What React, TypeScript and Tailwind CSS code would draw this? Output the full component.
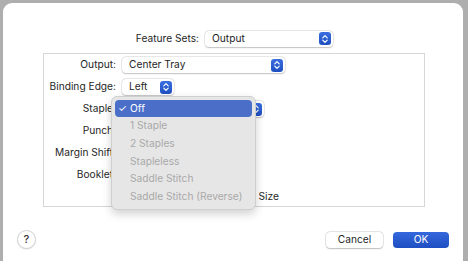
const font = { fontFamily: "Inter, 'Noto Sans', sans-serif" };

function Stepper() {
  return (
    <div className="w-[12px] h-[13px] rounded-[3px] bg-gradient-to-b from-[#3a6ee0] to-[#1f4fc0] flex items-center justify-center">
      <svg width="8" height="10" viewBox="0 0 8 10" fill="none">
        <path d="M1.8 3.8 L4 1.6 L6.2 3.8" stroke="white" strokeWidth="1.2" strokeLinecap="round" strokeLinejoin="round" />
        <path d="M1.8 6.2 L4 8.4 L6.2 6.2" stroke="white" strokeWidth="1.2" strokeLinecap="round" strokeLinejoin="round" />
      </svg>
    </div>
  );
}

function Popup({ value, width }: { value: string; width: string }) {
  return (
    <div
      className={`${width} h-[16px] bg-white rounded-[4px] shadow-[0_0_0_0.5px_rgba(0,0,0,0.12),0_0.5px_1.5px_rgba(0,0,0,0.2)] flex items-center justify-between pl-[7px] pr-[2px]`}
    >
      <span className="text-[#262626]">{value}</span>
      <Stepper />
    </div>
  );
}

const rows = [
  { label: "Output:", control: <Popup value="Center Tray" width="w-[163px]" /> },
  { label: "Binding Edge:", control: <Popup value="Left" width="w-[52px]" /> },
  { label: "Staple:", control: <Popup value="Off" width="w-[142px]" /> },
  { label: "Punch:", control: <Popup value="Off" width="w-[100px]" /> },
  { label: "Margin Shift:", control: <Popup value="Off" width="w-[100px]" /> },
  { label: "Booklet:", control: <Popup value="Off" width="w-[100px]" /> },
];

const items = ["1 Staple", "2 Staples", "Stapleless", "Saddle Stitch", "Saddle Stitch (Reverse)"];

export default function App() {
  return (
    <div className="w-[468px] h-[261px] bg-[#aeaeae] pt-[3px] pl-[3px] pr-[5px] text-[10.2px] text-[#262626]" style={font}>
      <div className="relative h-full bg-white rounded-t-[9px] flex flex-col">
        {/* Feature Sets */}
        <div className="flex items-center mt-[27px] h-[17px]">
          <div className="w-[196px] text-right">Feature Sets:</div>
          <div className="ml-[6px]">
            <Popup value="Output" width="w-[128px]" />
          </div>
        </div>

        {/* Group box */}
        <div className="ml-[40px] mt-[6px] w-[382px] h-[154px] border border-[#d6d6d6] overflow-hidden">
          {rows.map((r) => (
            <div key={r.label} className="flex items-center h-[22px]">
              <div className="w-[72px] text-right whitespace-nowrap">{r.label}</div>
              <div className="ml-[6px]">{r.control}</div>
            </div>
          ))}
          <div className="flex items-center h-[22px] pl-[78px]">
            <div className="w-[157px] flex items-center justify-end whitespace-nowrap">
              <div className="w-[12px] h-[12px] rounded-[3px] bg-white border border-[#c8c8c8]" />
              <span className="ml-[6px]">Scale to Paper Size</span>
            </div>
          </div>
        </div>

        {/* Bottom buttons */}
        <div className="flex items-center mt-[23px] h-[19px] pl-[14px] pr-[14px]">
          <div className="w-[19px] h-[19px] rounded-full bg-white border border-[#d4d4d4] shadow-[0_0.5px_1px_rgba(0,0,0,0.12)] flex items-center justify-center text-[11px] font-medium text-[#333]">
            ?
          </div>
          <div className="ml-auto flex gap-[10px]">
            <div className="w-[57px] h-[16px] rounded-[4px] bg-white shadow-[0_0_0_0.5px_rgba(0,0,0,0.15),0_0.5px_1.5px_rgba(0,0,0,0.2)] flex items-center justify-center">
              Cancel
            </div>
            <div className="w-[56px] h-[16px] rounded-[4px] bg-gradient-to-b from-[#3468dc] to-[#1e4fc2] text-white flex items-center justify-center">
              OK
            </div>
          </div>
        </div>

        {/* Open staple menu */}
        <div className="absolute left-[108px] top-[93px] w-[145px] h-[114px] rounded-[6px] bg-[#e6e6e6] border border-[#cfcfcf] shadow-[0_4px_10px_rgba(0,0,0,0.18)] pt-[3px] px-[3px]">
          <div className="h-[17px] rounded-[4px] bg-[#4b6fc9] text-white flex items-center">
            <span className="w-[15px] text-center text-[10px]">✓</span>
            <span>Off</span>
          </div>
          {items.map((it) => (
            <div key={it} className="h-[17.7px] flex items-center pl-[15px] text-[#a9a9a9] whitespace-nowrap">
              {it}
            </div>
          ))}
        </div>
      </div>
    </div>
  );
}
